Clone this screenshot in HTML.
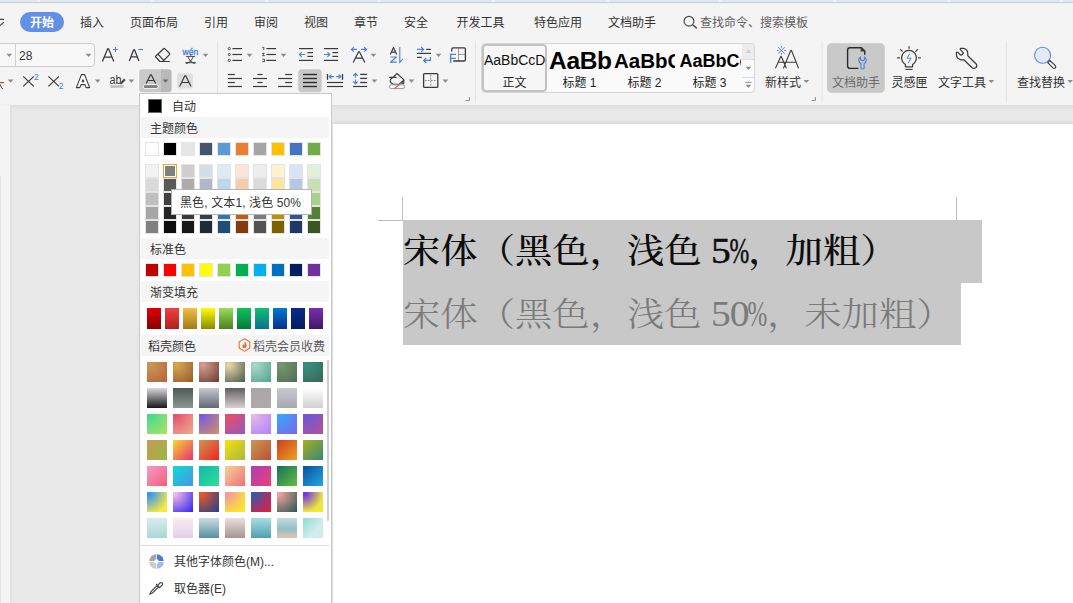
<!DOCTYPE html>
<html lang="zh-CN">
<head>
<meta charset="utf-8">
<title>WPS 文字</title>
<style>
*{box-sizing:border-box;margin:0;padding:0}
html,body{width:1073px;height:603px;overflow:hidden}
body{position:relative;background:#e8e8e8;font-family:"Liberation Sans","Noto Sans CJK SC",sans-serif;font-size:12px;color:#333}
.abs{position:absolute}
#ribbon{position:absolute;left:0;top:0;width:1073px;height:105px;background:#f4f4f4}
#topstrip{position:absolute;left:0;top:0;width:1073px;height:3px;background:#e3e7f0;border-bottom:1px solid #c6cbd9}
#topstrip i{position:absolute;top:0;width:3px;height:2px;background:#f0f2f7}
.tab{position:absolute;top:13px;height:20px;line-height:21px;margin-left:1px;font-size:12px;color:#333;white-space:nowrap}
#tab-start{left:20px;top:12px;width:44px;height:20px;line-height:22px;margin-left:0;background:#6290e6;color:#fff;border-radius:10px;text-align:center;font-weight:bold}
.lbl{position:absolute;font-size:12px;color:#333;white-space:nowrap;line-height:14px}
.sep{position:absolute;width:1px;background:#e2e2e2}
.dd{position:absolute;width:0;height:0;border-left:3px solid transparent;border-right:3px solid transparent;border-top:4px solid #666}
svg{position:absolute;overflow:visible}
/* gray body */
#leftstrip{position:absolute;left:0;top:105px;width:10px;height:498px;background:#f4f4f4;box-shadow:1px 0 2px rgba(0,0,0,.05)}
#shadow{position:absolute;left:10px;top:105px;width:1063px;height:4px;background:linear-gradient(#dcdcdc,#e8e8e8)}
#page{position:absolute;left:333px;top:124px;width:740px;height:479px;background:#fff;box-shadow:0 -1px 4px rgba(0,0,0,.10)}
/* panel */
#panel{position:absolute;left:139px;top:93px;width:193px;height:515px;background:#fff;border:1px solid #c9c9c9}
.hdr{position:absolute;left:1px;width:188px;height:21px;background:#f5f5f5;line-height:21px;padding-top:2px;font-size:12px;color:#333;padding-left:9px}
.sw{position:absolute;width:14px;height:14px;border:1px solid #e4e4e4}
.gsw{position:absolute;width:14px;height:21px}
.dsw{position:absolute;width:20px;height:20px}
.doc{position:absolute;left:70px;font-family:"Liberation Serif","Noto Serif CJK SC",serif;font-size:37.33px;line-height:62px;white-space:nowrap;height:62px}
.doc .hw{display:inline-block;width:18.67px;text-align:center;font-size:39.5px;line-height:1;vertical-align:baseline}
#l1 .hw{-webkit-text-stroke:0.5px #0d0d0d}
.doc .pc{transform:scaleX(0.6);transform-origin:50% 50%;width:18.67px;display:inline-block;text-indent:-7.1px}
.doc .sp{display:inline-block;width:9.33px}
.sty{top:75.5px;height:14px;line-height:14px;font-size:12px;text-align:center;color:#222;white-space:nowrap}
</style>
</head>
<body>
<div id="ribbon">
  <div id="topstrip"><i style="left:37px"></i><i style="left:151px"></i><i style="left:265px"></i><i style="left:378px"></i><i style="left:492px"></i><i style="left:606px"></i><i style="left:719px"></i><i style="left:833px"></i><i style="left:947px"></i><i style="left:1060px"></i></div>
  <!-- TABS -->
  <div class="tab" id="tab-start">开始</div>
  <div class="tab" style="left:79px">插入</div>
  <div class="tab" style="left:129px">页面布局</div>
  <div class="tab" style="left:203px">引用</div>
  <div class="tab" style="left:253px">审阅</div>
  <div class="tab" style="left:303px">视图</div>
  <div class="tab" style="left:353px">章节</div>
  <div class="tab" style="left:403px">安全</div>
  <div class="tab" style="left:455.5px">开发工具</div>
  <div class="tab" style="left:533px">特色应用</div>
  <div class="tab" style="left:607px">文档助手</div>
  <div class="tab" style="left:699px;color:#606060">查找命令、搜索模板</div>
  <!-- RI-START -->
  <div class="abs" style="left:-6px;top:43px;width:101px;height:24px;border:1px solid #cdcdcd;border-radius:4px;background:#f8f8f8"></div>
  <div class="abs" style="left:15px;top:44px;width:1px;height:22px;background:#d2d2d2"></div>
  <div class="abs" style="left:19px;top:48px;font-size:12px;line-height:16px;color:#333">28</div>
  <div class="abs" style="left:481px;top:43px;width:274px;height:50px;border:1px solid #d6d6d6;border-radius:4px;background:#fafafa;overflow:hidden"></div>
  <div class="abs" style="left:482px;top:44px;width:65px;height:48px;border:2px solid #c2c2c2;border-radius:4px;background:#f7f7f7"></div>
  <div class="abs" style="left:484px;top:50px;width:62px;height:20px;overflow:hidden;font-size:14px;line-height:20px;color:#111;white-space:nowrap">AaBbCcDd</div>
  <div class="abs sty" style="left:482px;width:65px">正文</div>
  <div class="abs" style="left:549px;top:44px;width:63px;height:32px;overflow:hidden;font-size:24.5px;line-height:34px;color:#000;font-weight:bold;white-space:nowrap;letter-spacing:-0.3px">AaBbC</div>
  <div class="abs sty" style="left:547px;width:65px">标题 1</div>
  <div class="abs" style="left:614px;top:44px;width:61px;height:32px;overflow:hidden;font-size:20.5px;line-height:34px;color:#000;font-weight:bold;white-space:nowrap">AaBbCc</div>
  <div class="abs sty" style="left:612px;width:65px">标题 2</div>
  <div class="abs" style="left:679.5px;top:44px;width:61px;height:32px;overflow:hidden;font-size:18px;line-height:35px;color:#000;font-weight:bold;white-space:nowrap">AaBbCcD</div>
  <div class="abs sty" style="left:677px;width:65px">标题 3</div>
  <div class="abs" style="left:742px;top:44px;width:12px;height:16px;background:#ececec;border-bottom:1px solid #dcdcdc;border-top-right-radius:3px"></div>
  <div class="abs" style="left:742px;top:77px;width:12px;height:1px;background:#cfdcf0"></div>
  <svg style="left:0;top:0" width="1073" height="105" viewBox="0 0 1073 105">
   <path d="M6.500000000000001 53.8 H12.100000000000001 L9.3 57.0 Z" fill="#8a8a8a"/>
   <path d="M85.7 53.8 H91.3 L88.5 57.0 Z" fill="#8a8a8a"/>
   <path d="M102.4 61.4 L107.55 48.90 Q108.10 48.10 108.65 48.90 L113.8 61.4 M104.2 57.2 H112.0" stroke="#3a3a3a" stroke-width="1.25" fill="none" stroke-linejoin="round"/>
   <path d="M113.1 49.5 H117.9 M115.5 47.1 V51.9" stroke="#4a80e0" stroke-width="1.1" fill="none" />
   <path d="M129.3 61 L133.55 50.10 Q134.10 49.30 134.65 50.10 L138.9 61 M131.1 56.8 H137.1" stroke="#3a3a3a" stroke-width="1.25" fill="none" stroke-linejoin="round"/>
   <path d="M138.2 49.5 H143" stroke="#4a80e0" stroke-width="1.1" fill="none" />
   <path d="M155.4 56.5 L163.5 48.7 Q164.2 48.1 164.9 48.8 L169.5 53.3 Q170.1 54 169.5 54.7 L162.7 61.5 H159.9 Z M157.9 54.2 L163.7 60.3 M162 61.5 H169.8" stroke="#3a3a3a" stroke-width="1.2" fill="none" stroke-linejoin="round"/>
   <text x="190.5" y="54.5" font-size="8.6" fill="#4a80e0" stroke="#4a80e0" stroke-width="0.3" text-anchor="middle" font-family="Liberation Sans, sans-serif">wén</text>
   <text x="190.6" y="63.4" font-size="10" fill="#3a3a3a" font-weight="normal" text-anchor="middle" font-family="Liberation Sans, Noto Sans CJK SC, sans-serif">文</text>
   <path d="M185.4 62.7 L195.8 62.7" stroke="#3a3a3a" stroke-width="1" fill="none"/>
   <path d="M202.7 53.8 H208.3 L205.5 57.0 Z" fill="#8a8a8a"/>
   <path d="M0 82.6 L4 82.6" stroke="#d04040" stroke-width="1.2" fill="none"/>
   <path d="M0.2 84.4 Q1.2 87.4 2.6 89" stroke="#3a3a3a" stroke-width="1" fill="none" />
   <path d="M7.8999999999999995 79.5 H13.5 L10.7 82.7 Z" fill="#8a8a8a"/>
   <path d="M23.2 76.4 L33.8 86.4 M33.8 76.4 L23.2 86.4" stroke="#3a3a3a" stroke-width="1.2" fill="none" />
   <text x="34" y="80.2" font-size="8.5" fill="#4a80e0" font-weight="normal" text-anchor="start" font-family="Liberation Sans, Noto Sans CJK SC, sans-serif">2</text>
   <path d="M48.4 76.4 L59 86.4 M59 76.4 L48.4 86.4" stroke="#3a3a3a" stroke-width="1.2" fill="none" />
   <text x="58.8" y="88.6" font-size="8.5" fill="#4a80e0" font-weight="normal" text-anchor="start" font-family="Liberation Sans, Noto Sans CJK SC, sans-serif">2</text>
   <path d="M76.4 87.6 L81.4 74.6 H84.6 L89.6 87.6 H86.2 L85 84.6 H81 L79.8 87.6 Z M82.3 81.8 H83.7 L83 79.8 Z" stroke="#3a3a3a" stroke-width="1.1" fill="#fff" stroke-linejoin="round" fill-rule="evenodd"/>
   <path d="M94.8 79.5 H100.39999999999999 L97.6 82.7 Z" fill="#8a8a8a"/>
   <text transform="translate(109.6,83.6) scale(0.8,1)" font-size="13.5" fill="#3a3a3a" font-family="Liberation Sans, sans-serif">ab</text>
   <path d="M120 83.6 L124 78.8 L125.4 80 L121.4 84.2 Z" stroke="#3a3a3a" stroke-width="0.4" fill="#3a3a3a" />
   <rect x="110" y="85.2" width="14" height="2.6" rx="1.3" fill="#bcbcbc"/>
   <path d="M128.6 79.5 H134.20000000000002 L131.4 82.7 Z" fill="#8a8a8a"/>
   <path d="M142.2 69.3 H161 V92.3 H142.2 A3 3 0 0 1 139.2 89.3 V72.3 A3 3 0 0 1 142.2 69.3 Z" fill="#c9c9c9"/>
   <path d="M161 69.3 H168.6 A3 3 0 0 1 171.6 72.3 V89.3 A3 3 0 0 1 168.6 92.3 H161 Z" fill="#b9b9b9"/>
   <path d="M146.2 83.6 L150.35 75.10 Q150.90 74.30 151.45 75.10 L155.6 83.6 M147.8 80.5 H154.0" stroke="#3a3a3a" stroke-width="1.2" fill="none" stroke-linejoin="round"/>
   <rect x="143.2" y="84.6" width="15" height="4" rx="2" fill="#7f7f7f" stroke="#fff" stroke-width="0.9"/>
   <path d="M162.7 79.5 H168.3 L165.5 82.7 Z" fill="#666"/>
   <rect x="177.2" y="73.2" width="15.6" height="15.2" rx="1.5" fill="#dedede"/>
   <path d="M179.6 86.4 L184.75 76.10 Q185.30 75.30 185.85 76.10 L191 86.4 M181.7 82.5 H188.9" stroke="#3a3a3a" stroke-width="1.2" fill="none" stroke-linejoin="round"/>
   <rect x="217" y="41" width="1" height="52" fill="#e4e4e4"/>
   <circle cx="229.3" cy="48.6" r="1.1" fill="none" stroke="#3a3a3a" stroke-width="0.9"/>
   <path d="M232.4 48.6 L242 48.6" stroke="#3a3a3a" stroke-width="1.2" fill="none"/>
   <circle cx="229.3" cy="54.5" r="1.1" fill="none" stroke="#3a3a3a" stroke-width="0.9"/>
   <path d="M232.4 54.5 L242 54.5" stroke="#3a3a3a" stroke-width="1.2" fill="none"/>
   <circle cx="229.3" cy="60.4" r="1.1" fill="none" stroke="#3a3a3a" stroke-width="0.9"/>
   <path d="M232.4 60.4 L242 60.4" stroke="#3a3a3a" stroke-width="1.2" fill="none"/>
   <path d="M246.7 53.8 H252.3 L249.5 57.0 Z" fill="#8a8a8a"/>
   <path d="M266.4 48.6 L276 48.6" stroke="#3a3a3a" stroke-width="1.2" fill="none"/>
   <path d="M266.4 54.5 L276 54.5" stroke="#3a3a3a" stroke-width="1.2" fill="none"/>
   <path d="M266.4 60.4 L276 60.4" stroke="#3a3a3a" stroke-width="1.2" fill="none"/>
   <path d="M262.2 47.4 H263.8 V49.9" stroke="#3a3a3a" stroke-width="0.9" fill="none" />
   <path d="M262.2 53.3 H264.6 M262.2 55.7 H264.6 M262.6 53.3 L264.2 55.7" stroke="#3a3a3a" stroke-width="0.9" fill="none" />
   <path d="M262.2 59.2 H264.6 V61.6 H262.2" stroke="#3a3a3a" stroke-width="0.9" fill="none" />
   <path d="M280.7 53.8 H286.3 L283.5 57.0 Z" fill="#8a8a8a"/>
   <path d="M299 48.6 L313 48.6" stroke="#3a3a3a" stroke-width="1.2" fill="none"/>
   <path d="M299 60.4 L313 60.4" stroke="#3a3a3a" stroke-width="1.2" fill="none"/>
   <path d="M307.4 52.6 L313 52.6" stroke="#3a3a3a" stroke-width="1.2" fill="none"/>
   <path d="M307.4 56.4 L313 56.4" stroke="#3a3a3a" stroke-width="1.2" fill="none"/>
   <path d="M305 54.5 H299.6 M301.8 52.2 L299.4 54.5 L301.8 56.8" stroke="#4a80e0" stroke-width="1.1" fill="none" />
   <path d="M324 48.6 L338 48.6" stroke="#3a3a3a" stroke-width="1.2" fill="none"/>
   <path d="M324 60.4 L338 60.4" stroke="#3a3a3a" stroke-width="1.2" fill="none"/>
   <path d="M332.4 52.6 L338 52.6" stroke="#3a3a3a" stroke-width="1.2" fill="none"/>
   <path d="M332.4 56.4 L338 56.4" stroke="#3a3a3a" stroke-width="1.2" fill="none"/>
   <path d="M324 54.5 H329.6 M327.4 52.2 L329.8 54.5 L327.4 56.8" stroke="#4a80e0" stroke-width="1.1" fill="none" />
   <path d="M353.2 62.4 L358.45 51.90 Q359.00 51.10 359.55 51.90 L364.8 62.4 M355.4 58.2 H362.6" stroke="#3a3a3a" stroke-width="1.2" fill="none" stroke-linejoin="round"/>
   <path d="M351.6 49.4 H357 M353.8 47.2 L351.4 49.4 L353.8 51.6 M361 49.4 H366.4 M364.2 47.2 L366.6 49.4 L364.2 51.6" stroke="#4a80e0" stroke-width="1.2" fill="none" />
   <path d="M370.59999999999997 53.8 H376.2 L373.4 57.0 Z" fill="#8a8a8a"/>
   <path d="M390.3 54.6 L393.5 47.4 L396.7 54.6 M391.5 52.2 H395.5" stroke="#3a3a3a" stroke-width="1.2" fill="none" stroke-linejoin="round"/>
   <path d="M390.4 57 H396.4 L390.4 62.2 H396.8" stroke="#4a80e0" stroke-width="1.2" fill="none" stroke-linejoin="round"/>
   <path d="M399.8 47 V62.4 L402.8 59.2" stroke="#4a80e0" stroke-width="1.1" fill="none" />
   <path d="M417 49.4 H423.4 M421.2 47 L423.6 49.4 L421.2 51.8" stroke="#4a80e0" stroke-width="1.2" fill="none" />
   <path d="M426.2 49.4 L430.8 49.4" stroke="#3a3a3a" stroke-width="1.2" fill="none"/>
   <path d="M417 53.4 L431 53.4" stroke="#3a3a3a" stroke-width="1.2" fill="none"/>
   <path d="M417 57.4 L421.8 57.4" stroke="#3a3a3a" stroke-width="1.2" fill="none"/>
   <path d="M430.4 57 V60.4 H423.8 M426.2 58 L423.6 60.4 L426.2 62.8" stroke="#4a80e0" stroke-width="1.2" fill="none" />
   <path d="M435.8 53.8 H441.40000000000003 L438.6 57.0 Z" fill="#8a8a8a"/>
   <path d="M458.5 48 V61 M458.5 54.4 H465" stroke="#9a9a9a" stroke-width="1" fill="none" />
   <path d="M451.8 51.6 V49 Q451.8 47.8 453 47.8 H464.2 Q465.4 47.8 465.4 49 V59.8 Q465.4 61 464.2 61 H453.2" stroke="#3a3a3a" stroke-width="1.3" fill="none" />
   <path d="M450.6 62.8 V54.4 H456 M450.6 58.4 H455.8" stroke="#4a80e0" stroke-width="1.4" fill="none" />
   <rect x="475" y="41" width="1" height="62" fill="#e4e4e4"/>
   <path d="M228 74.5 L234.8 74.5" stroke="#3a3a3a" stroke-width="1.2" fill="none"/>
   <path d="M257.4 74.5 L262.6 74.5" stroke="#3a3a3a" stroke-width="1.2" fill="none"/>
   <path d="M285.2 74.5 L292 74.5" stroke="#3a3a3a" stroke-width="1.2" fill="none"/>
   <path d="M228 78.5 L242 78.5" stroke="#3a3a3a" stroke-width="1.2" fill="none"/>
   <path d="M253 78.5 L267 78.5" stroke="#3a3a3a" stroke-width="1.2" fill="none"/>
   <path d="M278 78.5 L292 78.5" stroke="#3a3a3a" stroke-width="1.2" fill="none"/>
   <path d="M228 82.5 L234.8 82.5" stroke="#3a3a3a" stroke-width="1.2" fill="none"/>
   <path d="M257.4 82.5 L262.6 82.5" stroke="#3a3a3a" stroke-width="1.2" fill="none"/>
   <path d="M285.2 82.5 L292 82.5" stroke="#3a3a3a" stroke-width="1.2" fill="none"/>
   <path d="M228 86.5 L242 86.5" stroke="#3a3a3a" stroke-width="1.2" fill="none"/>
   <path d="M253 86.5 L267 86.5" stroke="#3a3a3a" stroke-width="1.2" fill="none"/>
   <path d="M278 86.5 L292 86.5" stroke="#3a3a3a" stroke-width="1.2" fill="none"/>
   <rect x="298.3" y="69.3" width="23.4" height="23" rx="3.5" fill="#c8c8c8"/>
   <path d="M303 74.5 L317 74.5" stroke="#2a2a2a" stroke-width="1.35" fill="none"/>
   <path d="M303 78.5 L317 78.5" stroke="#2a2a2a" stroke-width="1.35" fill="none"/>
   <path d="M303 82.5 L317 82.5" stroke="#2a2a2a" stroke-width="1.35" fill="none"/>
   <path d="M303 86.5 L317 86.5" stroke="#2a2a2a" stroke-width="1.35" fill="none"/>
   <path d="M327.5 74 L327.5 79.8" stroke="#3a3a3a" stroke-width="1.3" fill="none"/>
   <path d="M342.5 74 L342.5 79.8" stroke="#3a3a3a" stroke-width="1.3" fill="none"/>
   <path d="M329.4 76.6 H333.8 M331.4 74.6 L329.2 76.6 L331.4 78.6 M336.2 76.6 H340.6 M338.6 74.6 L340.8 76.6 L338.6 78.6" stroke="#4a80e0" stroke-width="1.2" fill="none" />
   <path d="M327 82.5 L343 82.5" stroke="#3a3a3a" stroke-width="1.2" fill="none"/>
   <path d="M327 86.5 L343 86.5" stroke="#3a3a3a" stroke-width="1.2" fill="none"/>
   <path d="M355.5 73.8 V77.6 M353.2 75.8 L355.5 73.4 L357.8 75.8 M355.5 79.4 V83.4 M353.2 81.4 L355.5 83.8 L357.8 81.4" stroke="#4a80e0" stroke-width="1.2" fill="none" />
   <path d="M360.2 74.4 L367.1 74.4" stroke="#3a3a3a" stroke-width="1.3" fill="none"/>
   <path d="M360.2 78.4 L367.1 78.4" stroke="#3a3a3a" stroke-width="1.3" fill="none"/>
   <path d="M360.2 82.5 L367.1 82.5" stroke="#3a3a3a" stroke-width="1.3" fill="none"/>
   <path d="M353 86.5 L367 86.5" stroke="#3a3a3a" stroke-width="1.2" fill="none"/>
   <path d="M371.7 79.5 H377.3 L374.5 82.7 Z" fill="#8a8a8a"/>
   <path d="M389.2 77.4 H396.6 M392.9 77.4 L397 73.5 L404 79.8 L399.2 84.2 H393.6 Q390.2 83.4 390.2 80.6 Q390.4 78.6 392.9 77.4" stroke="#3a3a3a" stroke-width="1.1" fill="none" stroke-linejoin="round"/>
   <path d="M404 80 V83.8 H401.4 Z" stroke="#3a3a3a" stroke-width="0.6" fill="#555" />
   <rect x="389.4" y="84.8" width="15.2" height="3.8" rx="1.9" fill="#fdfdfd" stroke="#8a8a8a" stroke-width="0.9"/>
   <path d="M394.6 88.4 L399.2 84.8" stroke="#e84848" stroke-width="1.1" fill="none"/>
   <path d="M408.7 79.5 H414.3 L411.5 82.7 Z" fill="#8a8a8a"/>
   <rect x="423.6" y="73.6" width="14.2" height="13.8" rx="1" fill="none" stroke="#3a3a3a" stroke-width="1.3"/>
   <path d="M430.7 74.8 V86.6 M424.8 80.5 H436.8" stroke="#8c8c8c" stroke-width="1" fill="none" stroke-dasharray="1.8 1.2"/>
   <path d="M442.59999999999997 79.5 H448.2 L445.4 82.7 Z" fill="#8a8a8a"/>
   <path d="M469.4 97 V100.6 H465.6" stroke="#8a8a8a" stroke-width="1" fill="none" />
   <path d="M815.4 97 V100.6 H811.6" stroke="#8a8a8a" stroke-width="1" fill="none" />
   <circle cx="689" cy="21.2" r="4.9" fill="none" stroke="#4a4a4a" stroke-width="1.2"/>
   <path d="M692.6 24.8 L696.8 28.4" stroke="#4a4a4a" stroke-width="1.4" fill="none"/>
   <path d="M-1 19.4 H4 M4 22.2 L0 25.5" stroke="#444" stroke-width="1.1" fill="none" />
   <path d="M745.4 53 H751.4 L748.4 49.6 Z" fill="#cfcfcf"/>
   <path d="M745.6 66.7 H751.1999999999999 L748.4 69.9 Z" fill="#8a8a8a"/>
   <path d="M745.4 82.4 L751.4 82.4" stroke="#8a8a8a" stroke-width="1" fill="none"/>
   <path d="M745.6 84.7 H751.1999999999999 L748.4 87.9 Z" fill="#8a8a8a"/>
   <path d="M775.4 68.4 L780.6 56.8 Q781 56 781.4 56.8 L786.4 68.4 M783.4 68.4 L790.6 50.8 Q791.1 49.8 791.6 50.8 L798.6 68.4 M778.2 62.2 H795.8" stroke="#3a3a3a" stroke-width="1.1" fill="none" stroke-linejoin="round"/>
   <path d="M778.2 47.2 L784.6 53.6 M784.6 47.2 L778.2 53.6 M781.4 46 V47.8 M781.4 53 V54.8 M776.8 50.4 H778.6 M784.2 50.4 H786" stroke="#4a80e0" stroke-width="1" fill="none" />
   <path d="M803.6 79.9 H809.1999999999999 L806.4 83.10000000000001 Z" fill="#8a8a8a"/>
   <rect x="821.5" y="41" width="1" height="62" fill="#e4e4e4"/>
   <rect x="827" y="43.2" width="57.8" height="49.6" rx="4.5" fill="#c9c9c9"/>
   <path d="M858.4 68.4 H850 Q847.6 68.4 847.6 66 V50.2 Q847.6 47.8 850 47.8 H861.4 L864.8 51 V54.8" stroke="#2a2a2a" stroke-width="1.4" fill="none" />
   <path d="M861.2 47.8 V51 H864.8" stroke="#3a3a3a" stroke-width="1.2" fill="#3a3a3a" />
   <path d="M860.5 57 A3.7 3.7 0 0 0 860.9 63.5 V68.2 Q862.5 69.8 864.1 68.2 V63.5 A3.7 3.7 0 0 0 864.5 57 V59.6 Q862.5 61.6 860.5 59.6 Z" stroke="#4a80e0" stroke-width="1.1" fill="none" stroke-linejoin="round"/>
   <path d="M905.4 66.8 V64.4 Q901.6 62 901.6 57.8 A7.4 7.4 0 0 1 916.4 57.8 Q916.4 62 912.6 64.4 V66.8 Z" stroke="#3a3a3a" stroke-width="1.2" fill="none" stroke-linejoin="round"/>
   <path d="M905.4 69.4 L912.6 69.4" stroke="#3a3a3a" stroke-width="1.1" fill="none"/>
   <path d="M909 46.2 V48.8 M897 57.9 H900 M918 57.9 H921 M900.2 49.2 L902.6 51.6 M917.8 49.2 L915.4 51.6" stroke="#4a4a4a" stroke-width="1.3" fill="none" />
   <path d="M909.8 53.4 L907 58.2 H911 L908.2 63.2" stroke="#4a80e0" stroke-width="1" fill="none" stroke-linejoin="round"/>
   <path d="M960.3 48.4 H963.6 Q967.8 49.4 967.8 53.6 V55.8 L976.4 64.2 Q977.6 66.2 975.6 67.8 Q974 68.8 972.4 68 L963.8 59.8 H961 Q956.4 58.6 956.4 54.6 V52.3 H958 L960.4 55 Q962.6 55.4 963.4 52.8 L960.3 49.6 Z" stroke="#3a3a3a" stroke-width="1.2" fill="none" stroke-linejoin="round"/>
   <path d="M988.6 79.9 H994.1999999999999 L991.4 83.10000000000001 Z" fill="#8a8a8a"/>
   <rect x="1006" y="41" width="1" height="62" fill="#e4e4e4"/>
   <circle cx="1042.6" cy="55.2" r="8" fill="#e5e9f3" stroke="#5b8de6" stroke-width="1.1"/>
   <path d="M1047.7 62.6 L1049.8 60.5 L1055.4 65.7 Q1056.3 67.2 1055.2 68.1 Q1054 68.8 1052.9 67.8 Z" stroke="#3a3a3a" stroke-width="1.1" fill="#f4f4f4" stroke-linejoin="round"/>
   <path d="M1067.4 79.9 H1073.0 L1070.2 83.10000000000001 Z" fill="#8a8a8a"/>
  </svg>
  <div class="lbl" style="left:765px;top:75.5px">新样式</div>
  <div class="lbl" style="left:832px;top:75.5px;color:#6a6a6a">文档助手</div>
  <div class="lbl" style="left:891.5px;top:75.5px">灵感匣</div>
  <div class="lbl" style="left:938px;top:75.5px">文字工具</div>
  <div class="lbl" style="left:1017px;top:75.5px">查找替换</div>
  <!-- RI-END -->
</div>
<div id="leftstrip"><div class="abs" style="left:0;top:71px;width:1px;height:427px;background:#e4e4e4"></div></div>
<div id="shadow"></div>
<div id="page">
  <div class="abs" style="left:69px;top:73px;width:1px;height:24px;background:#bdbdbd"></div>
  <div class="abs" style="left:45px;top:96px;width:25px;height:1px;background:#bdbdbd"></div>
  <div class="abs" style="left:623px;top:73px;width:1px;height:24px;background:#bdbdbd"></div>
  <div class="abs" style="left:623px;top:96px;width:25px;height:1px;background:#bdbdbd"></div>
  <div class="abs" style="left:70px;top:96px;width:579px;height:62.5px;background:#c8c8c8"></div>
  <div class="abs" style="left:70px;top:158px;width:558px;height:62.5px;background:#c8c8c8"></div>
  <div class="doc" id="l1" style="top:96px;font-weight:500;color:#0d0d0d;transform:scaleY(0.925);transform-origin:0 47px">宋体（黑色，浅色<span class="sp">&nbsp;</span><span class="hw">5</span><span class="hw pc">%</span>，加粗）</div>
  <div class="doc" id="l2" style="top:159px;color:#7a7a7a;font-weight:300;transform:scaleY(0.89);transform-origin:0 47px">宋体（黑色，浅色<span class="sp">&nbsp;</span><span class="hw">5</span><span class="hw">0</span><span class="hw pc">%</span>，未加粗）</div>
</div>
<div id="panel">
  <div class="abs" style="left:8px;top:5px;width:14px;height:14px;background:#000;border:1px solid #666"></div>
  <div class="lbl" style="left:32px;top:6px">自动</div>
  <div class="hdr" style="top:23px">主题颜色</div>
  <div class="sw" style="left:5px;top:48px;background:#ffffff"></div>
  <div class="sw" style="left:23px;top:48px;background:#000000"></div>
  <div class="sw" style="left:41px;top:48px;background:#e7e6e6"></div>
  <div class="sw" style="left:59px;top:48px;background:#44546a"></div>
  <div class="sw" style="left:77px;top:48px;background:#5b9bd5"></div>
  <div class="sw" style="left:95px;top:48px;background:#ed7d31"></div>
  <div class="sw" style="left:113px;top:48px;background:#a5a5a5"></div>
  <div class="sw" style="left:131px;top:48px;background:#ffc000"></div>
  <div class="sw" style="left:149px;top:48px;background:#4472c4"></div>
  <div class="sw" style="left:167px;top:48px;background:#70ad47"></div>
  <div class="sw" style="left:5px;top:70px;background:#f2f2f2"></div>
  <div class="sw" style="left:23px;top:70px;background:#7f7f7f"></div>
  <div class="sw" style="left:41px;top:70px;background:#d0cece"></div>
  <div class="sw" style="left:59px;top:70px;background:#d6dce5"></div>
  <div class="sw" style="left:77px;top:70px;background:#deebf7"></div>
  <div class="sw" style="left:95px;top:70px;background:#fbe5d6"></div>
  <div class="sw" style="left:113px;top:70px;background:#ededed"></div>
  <div class="sw" style="left:131px;top:70px;background:#fff2cc"></div>
  <div class="sw" style="left:149px;top:70px;background:#dae3f3"></div>
  <div class="sw" style="left:167px;top:70px;background:#e2f0d9"></div>
  <div class="sw" style="left:5px;top:84px;background:#d9d9d9"></div>
  <div class="sw" style="left:23px;top:84px;background:#595959"></div>
  <div class="sw" style="left:41px;top:84px;background:#afabab"></div>
  <div class="sw" style="left:59px;top:84px;background:#adb9ca"></div>
  <div class="sw" style="left:77px;top:84px;background:#bdd7ee"></div>
  <div class="sw" style="left:95px;top:84px;background:#f8cbad"></div>
  <div class="sw" style="left:113px;top:84px;background:#dbdbdb"></div>
  <div class="sw" style="left:131px;top:84px;background:#ffe699"></div>
  <div class="sw" style="left:149px;top:84px;background:#b4c7e7"></div>
  <div class="sw" style="left:167px;top:84px;background:#c5e0b4"></div>
  <div class="sw" style="left:5px;top:98px;background:#bfbfbf"></div>
  <div class="sw" style="left:23px;top:98px;background:#404040"></div>
  <div class="sw" style="left:41px;top:98px;background:#767171"></div>
  <div class="sw" style="left:59px;top:98px;background:#8497b0"></div>
  <div class="sw" style="left:77px;top:98px;background:#9dc3e6"></div>
  <div class="sw" style="left:95px;top:98px;background:#f4b183"></div>
  <div class="sw" style="left:113px;top:98px;background:#c9c9c9"></div>
  <div class="sw" style="left:131px;top:98px;background:#ffd966"></div>
  <div class="sw" style="left:149px;top:98px;background:#8faadc"></div>
  <div class="sw" style="left:167px;top:98px;background:#a9d18e"></div>
  <div class="sw" style="left:5px;top:112px;background:#a6a6a6"></div>
  <div class="sw" style="left:23px;top:112px;background:#262626"></div>
  <div class="sw" style="left:41px;top:112px;background:#3b3838"></div>
  <div class="sw" style="left:59px;top:112px;background:#333f50"></div>
  <div class="sw" style="left:77px;top:112px;background:#2e75b6"></div>
  <div class="sw" style="left:95px;top:112px;background:#c55a11"></div>
  <div class="sw" style="left:113px;top:112px;background:#7c7c7c"></div>
  <div class="sw" style="left:131px;top:112px;background:#bf9000"></div>
  <div class="sw" style="left:149px;top:112px;background:#2f5597"></div>
  <div class="sw" style="left:167px;top:112px;background:#548235"></div>
  <div class="sw" style="left:5px;top:126px;background:#808080"></div>
  <div class="sw" style="left:23px;top:126px;background:#0d0d0d"></div>
  <div class="sw" style="left:41px;top:126px;background:#181717"></div>
  <div class="sw" style="left:59px;top:126px;background:#222a35"></div>
  <div class="sw" style="left:77px;top:126px;background:#1f4e79"></div>
  <div class="sw" style="left:95px;top:126px;background:#843c0b"></div>
  <div class="sw" style="left:113px;top:126px;background:#525252"></div>
  <div class="sw" style="left:131px;top:126px;background:#7f6000"></div>
  <div class="sw" style="left:149px;top:126px;background:#203864"></div>
  <div class="sw" style="left:167px;top:126px;background:#385723"></div>
  <div class="abs" style="left:23px;top:70px;width:14px;height:14px;border:1px solid #f5a623;box-shadow:inset 0 0 0 1px #fff"></div>
  <div class="hdr" style="top:144px">标准色</div>
  <div class="sw" style="left:5px;top:169px;background:#c00000"></div>
  <div class="sw" style="left:23px;top:169px;background:#ff0000"></div>
  <div class="sw" style="left:41px;top:169px;background:#ffc000"></div>
  <div class="sw" style="left:59px;top:169px;background:#ffff00"></div>
  <div class="sw" style="left:77px;top:169px;background:#92d050"></div>
  <div class="sw" style="left:95px;top:169px;background:#00b050"></div>
  <div class="sw" style="left:113px;top:169px;background:#00b0f0"></div>
  <div class="sw" style="left:131px;top:169px;background:#0070c0"></div>
  <div class="sw" style="left:149px;top:169px;background:#002060"></div>
  <div class="sw" style="left:167px;top:169px;background:#7030a0"></div>
  <div class="hdr" style="top:187px">渐变填充</div>
  <div class="gsw" style="left:7px;top:214px;background:linear-gradient(#e00000,#8a0000)"></div>
  <div class="gsw" style="left:25px;top:214px;background:linear-gradient(#f04040,#b02020)"></div>
  <div class="gsw" style="left:43px;top:214px;background:linear-gradient(#f5c040,#a07818)"></div>
  <div class="gsw" style="left:61px;top:214px;background:linear-gradient(#ffff00,#8a8a00)"></div>
  <div class="gsw" style="left:79px;top:214px;background:linear-gradient(#9cdc5a,#4a8020)"></div>
  <div class="gsw" style="left:97px;top:214px;background:linear-gradient(#10c060,#087838)"></div>
  <div class="gsw" style="left:115px;top:214px;background:linear-gradient(#10c070,#0a7090)"></div>
  <div class="gsw" style="left:133px;top:214px;background:linear-gradient(#0078d0,#083090)"></div>
  <div class="gsw" style="left:151px;top:214px;background:linear-gradient(#082c88,#061c60)"></div>
  <div class="gsw" style="left:169px;top:214px;background:linear-gradient(#7830b0,#401868)"></div>
  <div class="hdr" style="top:241px;padding-left:7px">稻壳颜色</div>
  <div class="lbl" style="left:113px;top:246px;color:#5a5a5a">稻壳会员收费</div>
  <svg style="left:98px;top:244px" width="13" height="14" viewBox="0 0 13 14"><path d="M6.5 0.8 L11.8 3.8 V10.2 L6.5 13.2 L1.2 10.2 V3.8 Z" fill="none" stroke="#f07030" stroke-width="1.1"/><path d="M6.8 3.6 C7.6 5 8.8 6 8.6 8 C8.5 9.4 7.6 10.3 6.4 10.3 C5.2 10.3 4.3 9.4 4.4 8.1 C4.5 7.2 5 6.8 5.3 6.2 C5.6 6.9 6 7.2 6.3 7.2 C6.2 6 6.3 4.8 6.8 3.6 Z" fill="#f07030"/></svg>
  <div class="dsw" style="left:7px;top:268px;background:radial-gradient(circle at 20% 15%,#c89858,#b85a38 115%)"></div>
  <div class="dsw" style="left:33px;top:268px;background:radial-gradient(circle at 20% 15%,#d8a850,#8a5028 115%)"></div>
  <div class="dsw" style="left:59px;top:268px;background:radial-gradient(circle at 20% 15%,#d8a090,#5a2c20 115%)"></div>
  <div class="dsw" style="left:85px;top:268px;background:radial-gradient(circle at 20% 15%,#f0d8a8,#2c4840 115%)"></div>
  <div class="dsw" style="left:111px;top:268px;background:radial-gradient(circle at 20% 15%,#a8dcc8,#4a9888 115%)"></div>
  <div class="dsw" style="left:137px;top:268px;background:radial-gradient(circle at 20% 15%,#789870,#4a6850 115%)"></div>
  <div class="dsw" style="left:163px;top:268px;background:radial-gradient(circle at 20% 15%,#389080,#3a6050 115%)"></div>
  <div class="dsw" style="left:7px;top:294px;background:linear-gradient(180deg,#d8d8e0,#181818)"></div>
  <div class="dsw" style="left:33px;top:294px;background:linear-gradient(180deg,#505858,#889890)"></div>
  <div class="dsw" style="left:59px;top:294px;background:linear-gradient(180deg,#c8c8d0,#606870)"></div>
  <div class="dsw" style="left:85px;top:294px;background:linear-gradient(180deg,#606060,#d8d0d0)"></div>
  <div class="dsw" style="left:111px;top:294px;background:linear-gradient(180deg,#a8a8a8,#b0a8a8)"></div>
  <div class="dsw" style="left:137px;top:294px;background:linear-gradient(180deg,#c8c8d0,#a8a8b0)"></div>
  <div class="dsw" style="left:163px;top:294px;background:linear-gradient(180deg,#ffffff,#d0d0d0)"></div>
  <div class="dsw" style="left:7px;top:320px;background:radial-gradient(circle at 10% 5%,#40d890,#c8e858 125%)"></div>
  <div class="dsw" style="left:33px;top:320px;background:radial-gradient(circle at 10% 5%,#e05070,#f8c098 125%)"></div>
  <div class="dsw" style="left:59px;top:320px;background:radial-gradient(circle at 10% 5%,#7058e8,#f0a040 125%)"></div>
  <div class="dsw" style="left:85px;top:320px;background:radial-gradient(circle at 10% 5%,#e85060,#8858d8 125%)"></div>
  <div class="dsw" style="left:111px;top:320px;background:radial-gradient(circle at 10% 5%,#e8b8e8,#a078f8 125%)"></div>
  <div class="dsw" style="left:137px;top:320px;background:radial-gradient(circle at 10% 5%,#38a8f8,#8858e8 125%)"></div>
  <div class="dsw" style="left:163px;top:320px;background:radial-gradient(circle at 10% 5%,#6858e0,#c85080 125%)"></div>
  <div class="dsw" style="left:7px;top:346px;background:linear-gradient(135deg,#c89858,#98b840)"></div>
  <div class="dsw" style="left:33px;top:346px;background:linear-gradient(135deg,#f8d830,#e83070)"></div>
  <div class="dsw" style="left:59px;top:346px;background:linear-gradient(135deg,#c89858,#f82020)"></div>
  <div class="dsw" style="left:85px;top:346px;background:linear-gradient(135deg,#f8e010,#a8b840)"></div>
  <div class="dsw" style="left:111px;top:346px;background:linear-gradient(135deg,#c89858,#c05030)"></div>
  <div class="dsw" style="left:137px;top:346px;background:linear-gradient(135deg,#c84020,#f0a020)"></div>
  <div class="dsw" style="left:163px;top:346px;background:linear-gradient(135deg,#a8b020,#388878)"></div>
  <div class="dsw" style="left:7px;top:372px;background:linear-gradient(135deg,#f898c8,#f06078)"></div>
  <div class="dsw" style="left:33px;top:372px;background:linear-gradient(135deg,#10d8d0,#4898e8)"></div>
  <div class="dsw" style="left:59px;top:372px;background:linear-gradient(135deg,#10b8a8,#30e098)"></div>
  <div class="dsw" style="left:85px;top:372px;background:linear-gradient(135deg,#f8d098,#f07078)"></div>
  <div class="dsw" style="left:111px;top:372px;background:linear-gradient(135deg,#a840b8,#f04070)"></div>
  <div class="dsw" style="left:137px;top:372px;background:linear-gradient(135deg,#187058,#60c040)"></div>
  <div class="dsw" style="left:163px;top:372px;background:linear-gradient(135deg,#085098,#20a8e8)"></div>
  <div class="dsw" style="left:7px;top:398px;background:radial-gradient(circle at 5% 5%,#3898f0 10%,#f8e840 80%)"></div>
  <div class="dsw" style="left:33px;top:398px;background:radial-gradient(circle at 5% 5%,#f0b8e8 8%,#3020f0 100%)"></div>
  <div class="dsw" style="left:59px;top:398px;background:radial-gradient(circle at 5% 5%,#e85828 8%,#204090 100%)"></div>
  <div class="dsw" style="left:85px;top:398px;background:radial-gradient(circle at 5% 5%,#f898a0 10%,#f8e828 85%)"></div>
  <div class="dsw" style="left:111px;top:398px;background:radial-gradient(circle at 5% 5%,#3858a8 8%,#f01838 100%)"></div>
  <div class="dsw" style="left:137px;top:398px;background:radial-gradient(circle at 5% 5%,#f0a0a0 8%,#285848 100%)"></div>
  <div class="dsw" style="left:163px;top:398px;background:radial-gradient(circle at 5% 5%,#7030e8 6%,#f0e838 72%)"></div>
  <div class="dsw" style="left:7px;top:424px;background:linear-gradient(180deg,#d8ecec,#a8d8d8)"></div>
  <div class="dsw" style="left:33px;top:424px;background:linear-gradient(180deg,#fcecec,#e0d0f0)"></div>
  <div class="dsw" style="left:59px;top:424px;background:linear-gradient(180deg,#c8dce0,#5890a0)"></div>
  <div class="dsw" style="left:85px;top:424px;background:linear-gradient(180deg,#e8e0dc,#a89490)"></div>
  <div class="dsw" style="left:111px;top:424px;background:linear-gradient(180deg,#a8dce0,#50a0b0)"></div>
  <div class="dsw" style="left:137px;top:424px;background:linear-gradient(180deg,#c8dcdc 0%,#90c0c8 55%, #e8c0b0 100%)"></div>
  <div class="dsw" style="left:163px;top:424px;background:linear-gradient(135deg,#90dcd0,#d0ecec 60%)"></div>
  <div class="abs" style="left:187px;top:266px;width:2px;height:161px;background:#cdcdcd;border-radius:1px"></div>
  <div class="abs" style="left:1px;top:451px;width:188px;height:1px;background:#dcdcdc"></div>
  <div class="lbl" style="left:34px;top:460.7px">其他字体颜色(M)...</div>
  <div class="lbl" style="left:34px;top:487.7px">取色器(E)</div>
  <svg style="left:9px;top:460px" width="15" height="15" viewBox="0 0 15 15"><path d="M7.1 7.1 V0.2 A7.3 7.3 0 0 0 0.2 7.1 Z" fill="#a4a4a4"/><path d="M7.9 7.1 V0.2 A7.3 7.3 0 0 1 14.8 7.1 Z" fill="#4d7dd8"/><path d="M7.1 7.9 V14.8 A7.3 7.3 0 0 1 0.2 7.9 Z" fill="#cacaca"/><path d="M7.9 7.9 V14.8 A7.3 7.3 0 0 0 14.8 7.9 Z" fill="#a0b8ec"/><circle cx="7.5" cy="7.5" r="2.2" fill="#fff"/></svg>
  <svg style="left:9px;top:486px" width="15" height="15" viewBox="0 0 15 15" fill="none" stroke="#444" stroke-width="1.1"><path d="M1 14 L2 11.5 L8 5.5 L9.5 7 L3.5 13 Z"/><path d="M7 4 L11 8"/><path d="M9 5 L11 3 A1.6 1.6 0 0 1 13.2 3 A1.6 1.6 0 0 1 13.2 5.2 L11 7"/></svg>
  <div class="abs" style="left:31px;top:95px;width:141px;height:26px;background:#fff;border:1px solid #b4b4b4;line-height:26px;letter-spacing:0.12px;padding-left:8px;font-size:12px;color:#333;white-space:nowrap">黑色, 文本1, 浅色 50%</div>
</div>
</body>
</html>
